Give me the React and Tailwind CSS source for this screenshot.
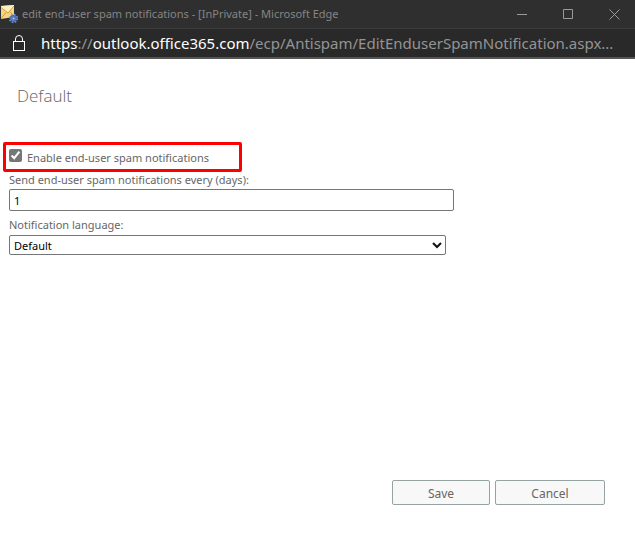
import React from "react";

function MailSettingsIcon() {
  return (
    <svg width="17" height="20" viewBox="0 0 17 20" className="shrink-0" aria-hidden="true">
      <path d="M0 2l13-1v12L0 15z" fill="#f5d67c" />
      <path d="M0 2l13-1v2L7 9 0 4z" fill="#fff0b8" />
      <path d="M0 3.5l7 5.5 6-7M0 14.5l5-6M13 12.5L9 7.5" fill="none" stroke="#c99b45" />
      <circle cx="12.5" cy="14.5" r="3" fill="#6d91cc" stroke="#4468ab" strokeWidth="1.4" />
      <circle cx="12.5" cy="14.5" r="4" fill="none" stroke="#6f96d6" strokeWidth="1.4" strokeDasharray="1.57 1.57" />
      <circle cx="12.5" cy="14.5" r="1.3" fill="#c8d8f2" stroke="#2f4f91" strokeWidth="0.7" />
    </svg>
  );
}

function LockIcon() {
  return (
    <svg width="12" height="16" viewBox="0 0 12 16" fill="none" stroke="#fff" className="shrink-0" aria-hidden="true">
      <rect x="0.5" y="6.5" width="11" height="9" />
      <path d="M2.5 6.5V4a3.5 3.5 0 0 1 7 0v2.5" />
    </svg>
  );
}

function WindowButton({ label, path }) {
  return (
    <button type="button" aria-label={label} className="flex h-7 w-[46px] items-center justify-center">
      <svg width="11" height="11" viewBox="0 0 11 11" fill="none" stroke="#9a9a9a" aria-hidden="true">
        <path d={path} />
      </svg>
    </button>
  );
}

function TitleBar() {
  return (
    <header className="flex h-7 items-center bg-[#2f2f2f]">
      <div className="flex min-w-0 flex-1 items-center gap-1 pl-px">
        <MailSettingsIcon />
        <h1 className="truncate text-[11px] leading-4 text-[#858585]">
          edit end-user spam notifications - [InPrivate] - Microsoft Edge
        </h1>
      </div>
      <div className="-mr-0.5 flex shrink-0">
        <WindowButton label="Minimize" path="M0 5.5h10" />
        <WindowButton label="Maximize" path="M0.5 0.5h9v9h-9z" />
        <WindowButton label="Close" path="M0.5 0.5l10 10M10.5 0.5l-10 10" />
      </div>
    </header>
  );
}

function AddressBar() {
  return (
    <div className="flex h-[31px] items-center gap-4 border-t border-b-2 border-t-[#3b3b3b] border-b-[#555] bg-[#292929] pl-[13px] pr-2">
      <LockIcon />
      <p className="min-w-0 truncate text-[15px] leading-6 text-[#949494]">
        <span className="text-white">https</span>://<span className="text-white">outlook.office365.com</span>
        /ecp/Antispam/EditEnduserSpamNotification.aspx...
      </p>
    </div>
  );
}

export default function App() {
  return (
    <div className="flex min-h-screen flex-col overflow-x-hidden bg-white font-['Noto_Sans','Open_Sans',sans-serif] text-[#666]">
      <TitleBar />
      <AddressBar />
      <form className="flex flex-1 flex-col" onSubmit={(e) => e.preventDefault()}>
        <h2 className="px-[17px] pt-[25px] font-['Open_Sans','Noto_Sans',sans-serif] text-[17px] leading-6 font-light">Default</h2>
        <div className="flex flex-col items-start px-[3px] pt-[34px] text-[11px] leading-4">
          <div className="flex h-[30px] w-[239px] items-center gap-[5px] rounded-[2px] border-3 border-[#fe0000] pl-[3px]">
            <input id="enable" type="checkbox" defaultChecked className="mb-1 size-[13px] accent-[#767676]" />
            <label htmlFor="enable" className="pt-0.5">Enable end-user spam notifications</label>
          </div>
          <div className="flex w-full flex-col px-1.5">
            <label htmlFor="days" className="pb-px leading-4">Send end-user spam notifications every (days):</label>
            <input
              id="days"
              type="text"
              defaultValue="1"
              className="h-[22px] w-full max-w-[445px] rounded-[2px] border border-[#767676] px-1 text-black"
            />
            <label htmlFor="language" className="pt-1.5 pb-0.5 leading-4">Notification language:</label>
            <div className="relative w-full max-w-[437px]">
              <select
                id="language"
                className="block h-5 w-full appearance-none rounded-[2px] border border-[#767676] bg-white px-1 pt-px text-black"
              >
                <option>Default</option>
              </select>
              <svg width="10" height="7" viewBox="0 0 10 7" fill="none" stroke="#111" strokeWidth="2" className="pointer-events-none absolute top-[7px] right-1" aria-hidden="true">
                <path d="M1 1l4 4 4-4" />
              </svg>
            </div>
          </div>
        </div>
        <footer className="mt-auto flex justify-end gap-[5px] pr-[30px] pb-7 text-[12px] leading-4">
          <button type="submit" className="h-[25px] w-[98px] rounded-[2px] border border-[#95a3a3] bg-[#f8f8f8] pt-0.5">Save</button>
          <button type="button" className="h-[25px] w-[110px] rounded-[2px] border border-[#95a3a3] bg-[#f8f8f8] pt-0.5">Cancel</button>
        </footer>
      </form>
    </div>
  );
}
